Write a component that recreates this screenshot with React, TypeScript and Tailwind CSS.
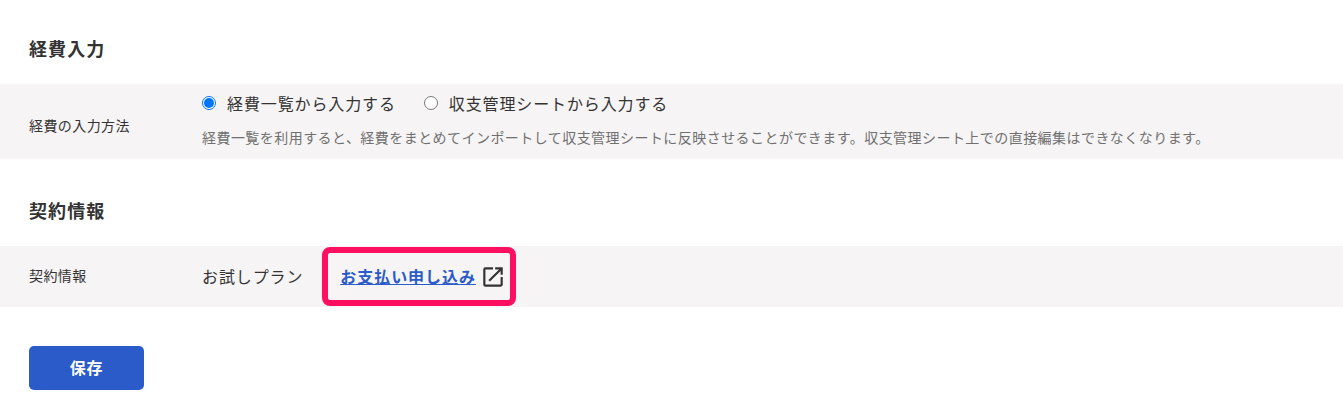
import { MdOpenInNew } from "react-icons/md"

const font = {
  fontFamily: '"Noto Sans CJK JP", "Noto Sans", sans-serif',
}

function Radio({ checked, label }: { checked?: boolean; label: string }) {
  return (
    <label className="flex items-center gap-[11px]">
      {checked ? (
        <span className="flex h-[14px] w-[14px] items-center justify-center rounded-full border border-[#0075ff] bg-white">
          <span className="h-[10px] w-[10px] rounded-full bg-[#0075ff]" />
        </span>
      ) : (
        <span className="h-[14px] w-[14px] rounded-full border border-[#767676] bg-white" />
      )}
      <span className="text-[16px] leading-[24px] tracking-[0.055em] text-[#333]">{label}</span>
    </label>
  )
}

export default function App() {
  return (
    <div className="h-[413px] w-[1343px] overflow-hidden bg-white" style={font}>
      <h2 className="flex h-[84px] items-center px-[29px] pt-[12px] text-[18px] font-bold tracking-[0.06em] text-[#333]">
        経費入力
      </h2>
      <div className="flex h-[75px] bg-[#f6f4f5] pl-[29px]">
        <div className="flex w-[173px] shrink-0 items-center pt-[7px] text-[14px] tracking-[0.03em] text-[#333]">
          経費の入力方法
        </div>
        <div className="pt-[7px]">
          <div className="flex items-center gap-[28px]">
            <Radio checked label="経費一覧から入力する" />
            <Radio label="収支管理シートから入力する" />
          </div>
          <p className="mt-[12px] text-[14px] leading-[20px] tracking-[0.032em] text-[#707070]">
            経費一覧を利用すると、経費をまとめてインポートして収支管理シートに反映させることができます。収支管理シート上での直接編集はできなくなります。
          </p>
        </div>
      </div>
      <h2 className="flex h-[87px] items-center px-[29px] pt-[15px] text-[18px] font-bold tracking-[0.06em] text-[#333]">
        契約情報
      </h2>
      <div className="flex h-[61px] items-center bg-[#f6f4f5] pl-[29px]">
        <div className="w-[173px] shrink-0 pb-[2px] text-[14px] tracking-[0.03em] text-[#333]">契約情報</div>
        <span className="pb-[2px] text-[16px] tracking-[0.055em] text-[#333]">お試しプラン</span>
        <div className="ml-[19px] flex h-[59px] w-[194px] items-center gap-[4px] rounded-[8px] border-[6px] border-[#ff0f5f] pl-[12px]">
          <a className="pb-[2px] text-[16px] font-bold tracking-[0.06em] text-[#2a5bc9] underline">お支払い申し込み</a>
          <MdOpenInNew size={26} className="text-[#333]" />
        </div>
      </div>
      <div className="px-[29px] pt-[39px]">
        <button className="h-[44px] w-[115px] rounded-[5px] bg-[#2a5bc9] pb-[3px] text-[16px] font-bold tracking-[0.05em] text-white">
          保存
        </button>
      </div>
    </div>
  )
}
